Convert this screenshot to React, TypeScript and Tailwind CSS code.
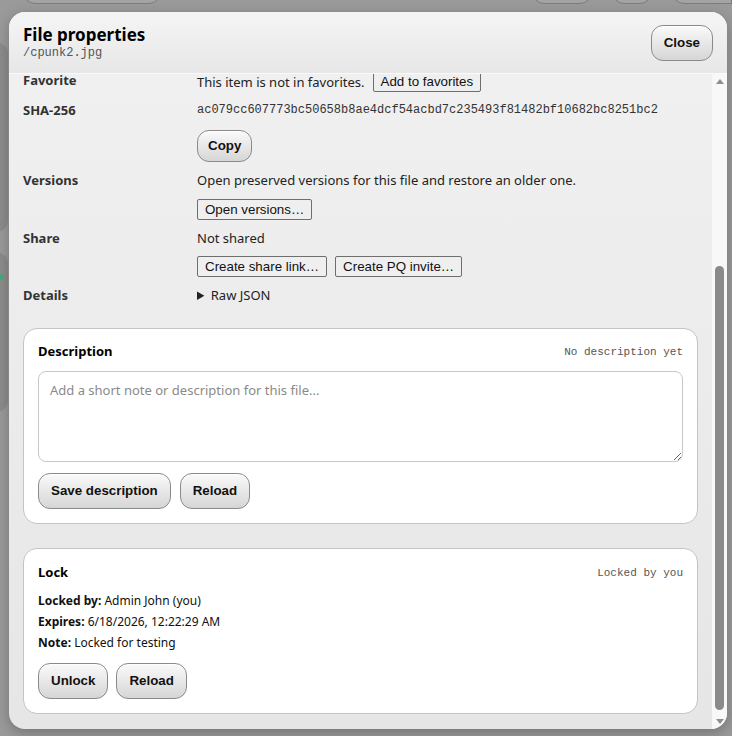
import { useEffect, useRef } from "react";

const sans = "font-['Noto_Sans','Open_Sans',sans-serif]";
const mono = "font-['Liberation_Mono','DejaVu_Sans_Mono',monospace]";
const arial = "font-['Liberation_Sans',Arial,sans-serif]";

// rounded, glossy action button
function PillButton({ children, small = false }: { children: React.ReactNode; small?: boolean }) {
  return (
    <button
      className={`${arial} ${small ? "h-[32px] px-[10px]" : "h-[36px] px-3"} rounded-[12px] border border-[#8a8a8a] bg-gradient-to-b from-[#fafafa] to-[#d6d6d6] text-[13.33px] font-bold text-[#111] shadow-[inset_0_1px_0_#fff]`}
    >
      {children}
    </button>
  );
}

// plain system-looking button
function FlatButton({ children }: { children: React.ReactNode }) {
  return (
    <button
      className={`${arial} h-[21px] px-[7px] rounded-[2px] border border-[#6e6e6e] bg-[#efefef] text-[13.33px] text-[#111] leading-none`}
    >
      {children}
    </button>
  );
}

function Row({ label, gap = "gap-[10px]", children }: { label: string; gap?: string; children: React.ReactNode }) {
  return (
    <>
      <div className="text-[13px] font-bold text-[#333] leading-[18px]">{label}</div>
      <div className={`flex flex-col items-start ${gap} text-[13px] text-[#222] leading-[18px]`}>{children}</div>
    </>
  );
}

function Card({
  title,
  status,
  top = "pt-[14px]",
  children,
}: {
  title: string;
  status: string;
  top?: string;
  children: React.ReactNode;
}) {
  return (
    <section className={`rounded-[14px] border border-[#c4c4c4] bg-white px-[14px] ${top} pb-[14px]`}>
      <div className="flex items-center justify-between h-[18px]">
        <h3 className="text-[13px] font-bold text-black">{title}</h3>
        <span className={`${mono} text-[11px] text-[#555]`}>{status}</span>
      </div>
      {children}
    </section>
  );
}

// classic scrollbar drawn beside the scrolling body
function ScrollRail() {
  return (
    <div className="flex w-[15px] shrink-0 flex-col bg-[#f8f8f8]">
      <div className="flex h-[15px] items-center justify-center">
        <svg width="8" height="5" viewBox="0 0 8 5">
          <path d="M0 5 L4 0 L8 5 Z" fill="#8f8f8f" />
        </svg>
      </div>
      <div className="flex flex-1 flex-col px-[3px] pt-[177px] pb-[4px]">
        <div className="flex-1 rounded-full bg-[#8a8a8a]" />
      </div>
      <div className="flex h-[15px] items-center justify-center">
        <svg width="8" height="5" viewBox="0 0 8 5">
          <path d="M0 0 L8 0 L4 5 Z" fill="#8f8f8f" />
        </svg>
      </div>
    </div>
  );
}

export default function App() {
  const bodyRef = useRef<HTMLDivElement>(null);

  useEffect(() => {
    const el = bodyRef.current;
    if (el) el.scrollTop = el.scrollHeight;
  }, []);

  return (
    <div className={`${sans} relative h-[736px] w-[732px] overflow-hidden bg-[#9a9a9a]`}>
      {/* dimmed page behind the dialog */}
      <div className="flex h-[4px] items-end gap-5 pl-[23px]">
        <div className="h-[40px] w-[138px] rounded-[12px] border border-[#7c7c7c] bg-[#a4a4a4]" />
        <div className="flex-1" />
        <div className="h-[40px] w-[60px] rounded-[12px] border border-[#7c7c7c] bg-[#a4a4a4]" />
        <div className="h-[40px] w-[40px] rounded-[12px] border border-[#7c7c7c] bg-[#a4a4a4]" />
        <div className="h-[40px] w-[60px] rounded-l-[12px] border border-[#7c7c7c] bg-[#a4a4a4]" />
      </div>
      <div className="mt-[38px] flex w-[38px] flex-col gap-[20px] -ml-[30px]">
        <div className="h-[190px] rounded-[12px] bg-[#8c8c8c]" />
        <div className="relative h-[160px] rounded-[12px] bg-[#8c8c8c]">
          <span className="absolute right-[5px] top-[22px] h-[6px] w-[6px] rounded-full bg-[#3fae7a]" />
        </div>
      </div>

      {/* dialog */}
      <div className="absolute left-[9px] top-[12px] flex h-[717px] w-[718px] flex-col overflow-hidden rounded-[16px] bg-gradient-to-b from-[#f1f1f1] to-[#e6e6e6] shadow-[0_4px_14px_rgba(0,0,0,0.25)]">
        <header className="flex items-center justify-between border-b border-[#fafafa] bg-gradient-to-b from-[#f5f5f5] to-[#e7e7e7] px-[14px] pt-[12px] pb-[12px]">
          <div>
            <h2 className="text-[17px] font-bold leading-[22px] text-black">File properties</h2>
            <div className={`${mono} text-[12px] leading-[15px] text-[#555]`}>/cpunk2.jpg</div>
          </div>
          <PillButton>Close</PillButton>
        </header>

        <div className="flex min-h-0 flex-1">
          <div
            ref={bodyRef}
            className="flex-1 overflow-y-auto pl-[14px] pr-[14px] pt-[20px] pb-[15px] [scrollbar-width:none]"
          >
            <div className="grid grid-cols-[174px_1fr] gap-y-[9px]">
              <Row label="Name">cpunk2.jpg</Row>
              <Row label="Path">/cpunk2.jpg</Row>
              <Row label="Type">image/jpeg</Row>
              <Row label="Size">1.2 MB (1,248,512 bytes)</Row>
              <Row label="Dimensions">1920 × 1080</Row>
              <Row label="Modified">6/17/2026, 11:58:04 PM</Row>
              <Row label="Created">6/17/2026, 11:58:04 PM</Row>
              <Row label="Owner">Admin John</Row>
              <Row label="Permissions">Read, write</Row>
              <Row label="Favorite">
                <div className="flex items-center gap-[8px]">
                  <span>This item is not in favorites.</span>
                  <FlatButton>Add to favorites</FlatButton>
                </div>
              </Row>
              <Row label="SHA-256" gap="gap-[11px]">
                <span className={`${mono} text-[12px] text-[#333]`}>
                  ac079cc607773bc50658b8ae4dcf54acbd7c235493f81482bf10682bc8251bc2
                </span>
                <PillButton small>Copy</PillButton>
              </Row>
              <Row label="Versions">
                <span>Open preserved versions for this file and restore an older one.</span>
                <FlatButton>Open versions…</FlatButton>
              </Row>
              <Row label="Share" gap="gap-[9px]">
                <span>Not shared</span>
                <div className="flex gap-2">
                  <FlatButton>Create share link…</FlatButton>
                  <FlatButton>Create PQ invite…</FlatButton>
                </div>
              </Row>
              <Row label="Details">
                <details>
                  <summary className="cursor-pointer">Raw JSON</summary>
                </details>
              </Row>
            </div>

            <div className="mt-[24px] flex flex-col gap-[24px]">
              <Card title="Description" status="No description yet">
                <textarea
                  placeholder="Add a short note or description for this file..."
                  className="mt-[10px] block h-[91px] w-full resize-y rounded-[8px] border border-[#c8c8c8] bg-white px-[11px] py-[9px] text-[13px] text-[#222] placeholder:text-[#8a8a8a] outline-none"
                />
                <div className="mt-[11px] flex gap-[9px]">
                  <PillButton>Save description</PillButton>
                  <PillButton>Reload</PillButton>
                </div>
              </Card>

              <Card title="Lock" status="Locked by you" top="pt-[15px]">
                <div className="mt-[8px] text-[12px] leading-[21px] text-[#111]">
                  <div>
                    <b>Locked by:</b> Admin John (you)
                  </div>
                  <div>
                    <b>Expires:</b> 6/18/2026, 12:22:29 AM
                  </div>
                  <div>
                    <b>Note:</b> Locked for testing
                  </div>
                </div>
                <div className="mt-[10px] flex gap-2">
                  <PillButton>Unlock</PillButton>
                  <PillButton>Reload</PillButton>
                </div>
              </Card>
            </div>
          </div>
          <ScrollRail />
        </div>
      </div>
    </div>
  );
}
